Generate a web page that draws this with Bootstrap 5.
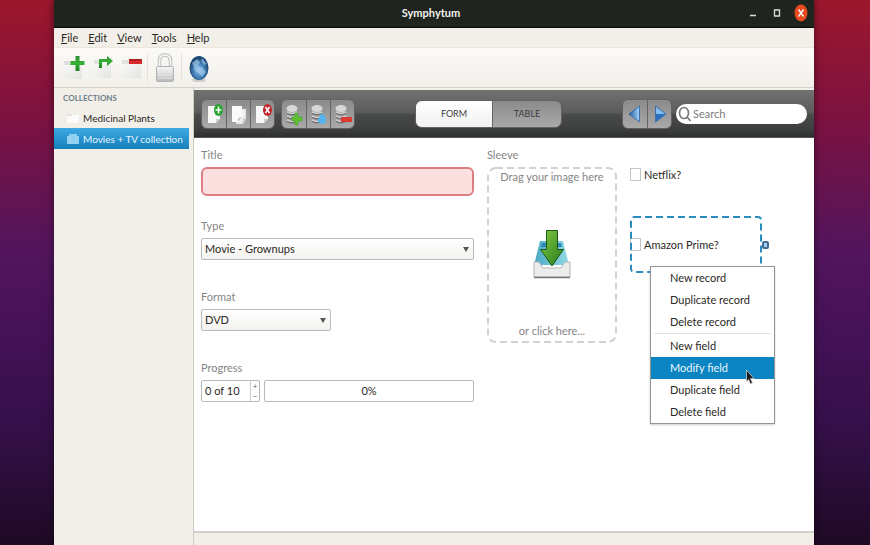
<!DOCTYPE html>
<html lang="en">
<head>
<meta charset="utf-8">
<meta name="viewport" content="width=device-width, initial-scale=1">
<title>Symphytum</title>
<link href="https://cdn.jsdelivr.net/npm/bootstrap@5.3.0/dist/css/bootstrap.min.css" rel="stylesheet">
<style>
  body {
    font-family: Lato, "Open Sans", sans-serif;
    font-size: 11px;
    line-height: 18px;
    color: #2b2825;
    padding: 0 56px 0 54px;
    background: linear-gradient(#9d172c 0, #7c1241 22%, #54155c 45%, #461257 60%, #35104a 78%, #1f0a25 100%);
  }
  button { font: inherit; color: inherit; border: 0; background: none; padding: 0; }
  svg { display: block; flex-shrink: 0; }
  .app-window { background: #f2efe9; box-shadow: 0 0 8px #0008; }
  .titlebar { background: #20241f; color: #f4f2ee; height: 28px; border-bottom: 1px solid #080a08; padding: 0 6px 2px 0; }
  .titlebar h1 { font-size: 11px; line-height: 18px; }
  .win-btn { width: 14px; height: 18px; }
  .win-controls { gap: 10px; }
  .menubar { height: 20px; gap: 10px; padding-left: 7px; border-bottom: 1px solid #e9e6df; }
  .menubar a { color: #2b2825; text-decoration: none; }
  .toolbar { height: 40px; padding-left: 6px; background: linear-gradient(#fbfaf7, #f2f0ea); border-bottom: 1px solid #d3d0ca; }
  .tool { width: 29px; height: 36px; display: grid; place-items: center; }
  .tool-wide { width: 33px; }
  .tool-sep { width: 1px; height: 28px; background: #e6e3dd; }
  .sidebar { width: 140px; padding: 1px 4px 0 0; border-right: 1px solid #cfccc6; }
  .sidebar h2 { font-size: 8px; line-height: 18px; color: #6d7f8c; padding-left: 9px; }
  .side-link { height: 21px; font-size: 10px; gap: 4px; padding-left: 13px; color: #2b2825; text-decoration: none; white-space: nowrap; }
  .side-link.chosen { color: #e4f3fc; background: linear-gradient(#3fa9e2, #1480bd); }
  .workspace { padding-top: 2px; }
  .record-bar { height: 48px; padding: 0 7px; background: linear-gradient(#727272, #666 25%, #5a5c5c 48%, #484b4a 52%, #3b3e3d 85%, #2c2f2e); border-bottom: 1px solid #555; }
  .seg { border-radius: 6px; background: linear-gradient(#8b8b8b, #a9a9a9); border: 1px solid #616161; overflow: hidden; }
  .seg button { width: 24px; height: 28px; display: grid; place-items: center; }
  .seg button + button { border-left: 1px solid #646464; }
  .seg-groups { gap: 6px; }
  .seg.view-seg { border-radius: 7px; }
  .view-seg button { width: 69px; height: 26px; font-size: 9px; color: #3c3c3c; }
  .view-seg button.current { width: 76px; background: linear-gradient(#fff, #f1f1f1); }
  .search-box { width: 131px; height: 20px; border-radius: 10px; background: #fff; padding: 0 6px 0 2px; gap: 2px; }
  .search-box input { border: 0; outline: 0; background: none; min-width: 0; width: 100%; padding: 0; }
  .search-box input::placeholder { color: #7c7c7c; opacity: 1; }
  .record-form {
    display: grid; grid-template-columns: 273fr 130fr 177fr; column-gap: 13px; align-content: start;
    padding: 8px 7px 12px; background: #fff; border-bottom: 2px solid #d2d0cc;
  }
  .field { min-height: 71px; }
  .field-label { display: block; color: #858585; line-height: 18px; margin-bottom: 3px; }
  .text-field, .pick, .spin, .meter { border: 1px solid #bbb9b5; border-radius: 2px; background: #fff; color: #2b2825; height: 22px; }
  .text-field { display: block; width: 100%; height: 29px; border: 2px solid #dc7e82; border-radius: 6px; background: #fce0e0; padding: 0 8px; outline: 0; }
  .pick {
    appearance: none; display: block; width: 100%; padding: 0 20px 0 3px;
    background: url("data:image/svg+xml,%3Csvg xmlns='http://www.w3.org/2000/svg' width='6' height='5'%3E%3Cpath d='M0 0h6L3 5z' fill='%23555'/%3E%3C/svg%3E") no-repeat right 4px center, linear-gradient(#fff, #f3f2ef);
  }
  .pick-short { width: 130px; }
  .spin { width: 59px; overflow: hidden; }
  .spin input { border: 0; outline: 0; width: 48px; padding: 0 0 0 3px; background: none; color: inherit; }
  .steps { width: 9px; border-left: 1px solid #cfcdc9; color: #666; }
  .steps button { height: 10px; font-size: 8px; line-height: 10px; }
  .drop-zone { height: 176px; color: #858585; padding: 1px 0 3px; width: 100%; }
  .dash { position: absolute; inset: 0; width: 100%; height: 100%; pointer-events: none; }
  .dash rect { x: 1px; y: 1px; width: calc(100% - 2px); height: calc(100% - 2px); rx: 8px; fill: none; stroke: #d2d2d2; stroke-width: 2px; stroke-dasharray: 7 4; }
  .dash.picked rect { stroke: #2a8bbd; rx: 3px; }
  .tick-field { height: 57px; width: 132px; }
  .tick-field input { appearance: none; width: 11px; height: 13px; border: 1px solid #c6c4c0; background: #fff; margin: 0; }
  .tick-field label { gap: 3px; }
  .ticks { gap: 13px; }
  .grip { position: absolute; right: -7px; top: 25px; width: 7px; height: 8px; border: 2px solid #3d6d94; border-radius: 2px; background: #a8d0ec; }
  .context-menu { position: absolute; left: 20px; top: 50px; z-index: 2; width: 125px; background: #fff; border: 1px solid #969492; box-shadow: 0 1px 2px #0003; }
  .context-menu button { display: block; width: 100%; height: 22px; text-align: left; padding-left: 19px; white-space: nowrap; }
  .context-menu button.hot { background: #0a85c2; color: #e9f5fc; }
  .context-menu hr { margin: 0 3px 1px; border-color: #888; }
  .pointer { position: absolute; left: 95px; top: 102px; }
  .statusbar { height: 12px; }
</style>
<script src="https://cdn.jsdelivr.net/npm/bootstrap@5.3.0/dist/js/bootstrap.bundle.min.js"></script>
</head>
<body>
<svg width="0" height="0" class="position-absolute" aria-hidden="true">
  <defs>
    <linearGradient id="paper" x2="1" y2="1"><stop stop-color="#fafafa"/><stop offset="1" stop-color="#e4e4e2"/></linearGradient>
    <linearGradient id="green" x2="0" y2="1"><stop stop-color="#2e8b2e"/><stop offset=".5" stop-color="#35b335"/><stop offset="1" stop-color="#1f7f1f"/></linearGradient>
    <linearGradient id="steel" x2="0" y2="1"><stop stop-color="#f4f4f4"/><stop offset="1" stop-color="#b9b9b9"/></linearGradient>
    <radialGradient id="earth" cx=".5" cy=".6"><stop stop-color="#8fc0ec"/><stop offset=".6" stop-color="#4380b8"/><stop offset="1" stop-color="#1b4672"/></radialGradient>
    <linearGradient id="tri"><stop stop-color="#1e5aa8"/><stop offset="1" stop-color="#a5d4fa"/></linearGradient>
    <linearGradient id="arrow" x2="1" y2="1"><stop stop-color="#86cc45"/><stop offset="1" stop-color="#23781a"/></linearGradient>
    <linearGradient id="sheet" x2="1"><stop stop-color="#4ba9c4"/><stop offset="1" stop-color="#93dbe8"/></linearGradient>
    <g id="stack">
      <path d="M3 4v12q5 3 10 0V4z" fill="#a0a0a0"/>
      <path d="M3 8q5 3 10 0M3 12q5 3 10 0M3 16q5 3 10 0" fill="none" stroke="#d0d0d0" stroke-width="1.500"/>
      <path d="M3 9.500q5 3 10 0M3 13.500q5 3 10 0M3 17.500q5 3 10 0" fill="none" stroke="#606060"/>
      <ellipse cx="8" cy="4.500" rx="5.500" ry="3.500" fill="#d8d8d8"/>
    </g>
  </defs>
</svg>

<div class="app-window min-vh-100 d-flex flex-column">
  <header class="titlebar d-flex align-items-center">
    <div class="flex-fill w-100"></div>
    <h1 class="fw-bold m-0">Symphytum</h1>
    <div class="win-controls flex-fill w-100 d-flex justify-content-end">
      <button class="win-btn" aria-label="Minimize"><svg width="14" height="18"><path d="M4 11.500h6" stroke="#ddd" stroke-width="1.500"/></svg></button>
      <button class="win-btn" aria-label="Maximize"><svg width="14" height="18"><path d="M4.500 6h5v6h-5z" fill="none" stroke="#ddd" stroke-width="1.300"/></svg></button>
      <button class="win-btn" aria-label="Close"><svg width="14" height="18"><ellipse cx="7" cy="9" rx="6.500" ry="8.500" fill="#e64a20"/><path d="M4.500 5.500l5 7m0-7l-5 7" stroke="#fff" stroke-width="1.300"/></svg></button>
    </div>
  </header>

  <nav class="menubar d-flex align-items-center" aria-label="Main menu">
    <a href="#"><u>F</u>ile</a><a href="#"><u>E</u>dit</a><a href="#"><u>V</u>iew</a><a href="#"><u>T</u>ools</a><a href="#"><u>H</u>elp</a>
  </nav>

  <div class="toolbar d-flex align-items-center" role="toolbar" aria-label="Collections">
    <button class="tool" aria-label="New collection"><svg width="24" height="32"><path d="M1 10h18v17H1z" fill="url(#paper)"/><path d="M1 9h8v4H1z" fill="#dededb"/><path d="M12.500 4h4v5h5v4h-5v6h-4v-6h-5v-4h5z" fill="url(#green)"/></svg></button>
    <button class="tool" aria-label="Duplicate collection"><svg width="24" height="32"><path d="M2 9h17v17H2z" fill="url(#paper)"/><path d="M2 8h6v4H2z" fill="#e2e2df"/><path d="M7 16V7h8V4l6 5-6 5v-4h-5v6z" fill="url(#green)"/></svg></button>
    <button class="tool" aria-label="Delete collection"><svg width="24" height="32"><path d="M1 9h19v17H1z" fill="url(#paper)"/><path d="M1 8h8v4H1z" fill="#e2e2df"/><path d="M8 7h13v5H8z" fill="#d92a2e"/><path d="M8 7h13v2H8z" fill="#b32024"/></svg></button>
    <span class="tool-sep"></span>
    <button class="tool tool-wide" aria-label="Lock"><svg width="24" height="32"><path d="M6.500 15V9q0-6 5.500-6t5.500 6v6" fill="none" stroke="#b3b3b3" stroke-width="3.500"/><path d="M6.500 15V9q0-6 5.500-6t5.500 6v6" fill="none" stroke="#f1f1f1" stroke-width="2"/><rect x="3.500" y="14.500" width="17" height="15" rx="1" fill="url(#steel)" stroke="#b2b2b2"/><path d="M5 17h14M5 20h14M5 23h14M5 26h14" stroke="#fff" stroke-opacity=".5"/></svg></button>
    <span class="tool-sep"></span>
    <button class="tool tool-wide" aria-label="Synchronize"><svg width="24" height="32"><ellipse cx="12" cy="28" rx="7" ry="2" fill="#aaa" opacity=".5"/><ellipse cx="12" cy="16" rx="9.500" ry="12" fill="url(#earth)"/><path d="M5 11l5-4 3 3-2 4 5 2 3 4-4 5-3-4-4-2-1-4zM15 6l5 6-3 1-3-4z" fill="#a9d0f2" opacity=".6"/></svg></button>
  </div>

  <div class="d-flex flex-grow-1">
    <aside class="sidebar flex-shrink-0">
      <h2 class="fw-bold m-0">COLLECTIONS</h2>
      <a class="side-link d-flex align-items-center" href="#"><svg width="12" height="12"><path d="M0 2h5l1 1h6v8H0z" fill="#fbfbfa"/><path d="M0 2h5v2H0z" fill="#e4e3e0"/></svg>Medicinal Plants</a>
      <a class="side-link chosen d-flex align-items-center" href="#" aria-current="page"><svg width="12" height="12"><path d="M0 3h2V1h8v2h2v8H0z" fill="#8fd0f2"/><path d="M3 3v8M9 3v8" stroke="#a6daf5"/></svg>Movies + TV collection</a>
    </aside>

    <main class="workspace flex-grow-1 d-flex flex-column">
      <div class="record-bar d-flex align-items-center justify-content-between">
        <div class="seg-groups d-flex">
          <div class="seg d-flex">
            <button aria-label="New record"><svg width="20" height="26"><path d="M4 5h12v13l-4 4H4z" fill="#f7f7f7"/><path d="M12 22v-4h4z" fill="#ccc"/><ellipse cx="14.500" cy="9" rx="4.500" ry="6" fill="#27a32f"/><path d="M14.500 5.500v7M11.500 9h6" stroke="#fff" stroke-width="1.500"/></svg></button>
            <button aria-label="Duplicate record"><svg width="20" height="26"><path d="M7 8h10v10l-3 5H7z" fill="#f0f0f0" stroke="#bbb" stroke-width=".5"/><path d="M3 5h10v11l-4 5H3z" fill="#fafafa"/><path d="M9 21v-4l4-1zM13 23l1-5 3-1z" fill="#c4c4c4"/></svg></button>
            <button aria-label="Delete record"><svg width="20" height="26"><path d="M3 5h12v13l-4 4H3z" fill="#f7f7f7"/><path d="M11 22v-4h4z" fill="#ccc"/><ellipse cx="14.500" cy="9" rx="4.500" ry="6" fill="#c1272d"/><path d="M12.500 6l4 6m0-6l-4 6" stroke="#fff" stroke-width="1.500"/></svg></button>
          </div>
          <div class="seg d-flex">
            <button aria-label="New field"><svg width="20" height="26"><use href="#stack" y="3"/><path d="M11 12h3v4h4v4h-4v4h-3v-4H8v-4h3z" fill="#5cc22f" stroke="#3e9a1d" stroke-width=".5"/></svg></button>
            <button aria-label="Modify field"><svg width="20" height="26"><use href="#stack" y="3"/><path d="M13 12q5 6 4 8-1 3-4 3t-4-3q-1-2 4-8z" fill="#55b4f0"/></svg></button>
            <button aria-label="Delete field"><svg width="20" height="26"><use href="#stack" y="3"/><path d="M8 16h11v5H8z" fill="#dc3b35"/></svg></button>
          </div>
        </div>
        <div class="seg view-seg d-flex">
          <button class="current" aria-pressed="true">FORM</button>
          <button aria-pressed="false">TABLE</button>
        </div>
        <div class="d-flex align-items-center gap-1">
          <div class="seg d-flex">
            <button aria-label="Previous record"><svg width="16" height="22"><path d="M12.500 3v16L2 11z" fill="url(#tri)" stroke="#2b5e9b" stroke-width=".8"/></svg></button>
            <button aria-label="Next record"><svg width="16" height="22"><path d="M3.500 3v16L14 11z" fill="#83bdf0" stroke="#2b5e9b" stroke-width=".8"/><path d="M4 11h10L4 18.500z" fill="#2c70bd"/></svg></button>
          </div>
          <label class="search-box d-flex align-items-center">
            <svg width="13" height="16" fill="none" stroke="#777" stroke-width="1.600"><ellipse cx="6" cy="7" rx="4.500" ry="5.500"/><path d="M9 11l3.500 4"/></svg>
            <input type="search" placeholder="Search" aria-label="Search">
          </label>
        </div>
      </div>

      <form class="record-form flex-grow-1">
        <div>
          <div class="field"><label class="field-label" for="title">Title</label><input class="text-field" id="title" type="text"></div>
          <div class="field"><label class="field-label" for="type">Type</label><select class="pick" id="type"><option>Movie - Grownups</option></select></div>
          <div class="field"><label class="field-label" for="format">Format</label><select class="pick pick-short" id="format"><option>DVD</option></select></div>
          <div class="field">
            <label class="field-label" for="progress">Progress</label>
            <div class="d-flex gap-1">
              <div class="spin d-flex flex-shrink-0">
                <input id="progress" type="text" value="0 of 10">
                <div class="steps d-flex flex-column"><button type="button" aria-label="Increase">+</button><button type="button" aria-label="Decrease">−</button></div>
              </div>
              <div class="meter flex-grow-1 d-flex align-items-center justify-content-center" role="progressbar" aria-label="Progress" aria-valuenow="0" aria-valuemin="0" aria-valuemax="10">0%</div>
            </div>
          </div>
        </div>

        <div>
          <span class="field-label">Sleeve</span>
          <button type="button" class="drop-zone position-relative d-flex flex-column align-items-center justify-content-between">
            <svg class="dash" aria-hidden="true"><rect/></svg>
            <span>Drag your image here</span>
            <svg width="40" height="52" viewBox="0 0 40 52"><path d="M8 13h23l6 24H2z" fill="url(#sheet)"/><path d="M10 15h19l1 4H9z" fill="#2f86b4"/><path d="M2 34h5l4 6h18l4-6h5v15H2z" fill="#ececec" stroke="#b5b5b5"/><path d="M2 49.500h36" stroke="#777" stroke-width="1.500"/><path d="M14.500 2.500h11v19h6L20 38 8.500 21.500h6z" fill="url(#arrow)" stroke="#1c5a16"/></svg>
            <span>or click here...</span>
          </button>
        </div>

        <div class="ticks d-flex flex-column">
          <div class="tick-field d-flex align-items-center"><label class="d-flex align-items-center"><input type="checkbox">Netflix?</label></div>
          <div class="tick-field position-relative d-flex align-items-center">
            <svg class="dash picked" aria-hidden="true"><rect/></svg>
            <label class="d-flex align-items-center"><input type="checkbox">Amazon Prime?</label>
            <span class="grip"></span>
            <div class="context-menu" role="menu">
              <button type="button" role="menuitem">New record</button>
              <button type="button" role="menuitem">Duplicate record</button>
              <button type="button" role="menuitem">Delete record</button>
              <hr>
              <button type="button" role="menuitem">New field</button>
              <button type="button" role="menuitem" class="hot">Modify field</button>
              <button type="button" role="menuitem">Duplicate field</button>
              <button type="button" role="menuitem">Delete field</button>
              <svg class="pointer" width="9" height="16" aria-hidden="true"><path d="M.5 1v12l2-2.500 2 4.500 2-1-2-4.500H8z" fill="#1c1c1c" stroke="#ddd" stroke-width=".7"/></svg>
            </div>
          </div>
        </div>
      </form>
      <footer class="statusbar"></footer>
    </main>
  </div>
</div>
</body>
</html>
